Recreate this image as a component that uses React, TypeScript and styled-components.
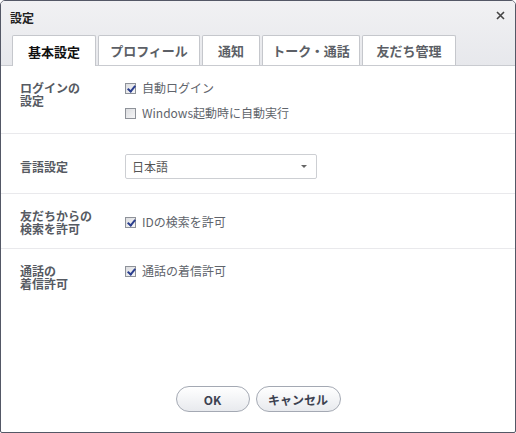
import { useState } from "react";
import styled, { createGlobalStyle } from "styled-components";

const GlobalStyle = createGlobalStyle`
  html, body {
    margin: 0;
    padding: 0;
    background: #ffffff;
  }
  body {
    font-family: "Noto Sans CJK JP", "Liberation Sans", sans-serif;
  }
`;

const tabs = [
  { label: "基本設定", width: 84 },
  { label: "プロフィール", width: 102 },
  { label: "通知", width: 58 },
  { label: "トーク・通話", width: 98 },
  { label: "友だち管理", width: 94 },
];

export default function App() {
  const [active, setActive] = useState(0);
  const [autoLogin, setAutoLogin] = useState(true);
  const [startup, setStartup] = useState(false);
  const [idSearch, setIdSearch] = useState(true);
  const [calls, setCalls] = useState(true);

  return (
    <>
      <GlobalStyle />
      <Window>
        <Header>
          <TitleRow>
            <Title>設定</Title>
            <CloseButton aria-label="close">
              <svg width="9" height="9" viewBox="0 0 9 9">
                <path d="M1 1L8 8M8 1L1 8" stroke="#444" strokeWidth="1.6" />
              </svg>
            </CloseButton>
          </TitleRow>
          <TabBar>
            {tabs.map((t, i) => (
              <Tab key={t.label} $w={t.width} $active={i === active} onClick={() => setActive(i)}>
                {t.label}
              </Tab>
            ))}
          </TabBar>
        </Header>

        <Body>
          <Section $pad="15px 0 13px">
            <Label>ログインの<br />設定</Label>
            <Options>
              <Check>
                <Box $checked={autoLogin} onClick={() => setAutoLogin(!autoLogin)} />
                自動ログイン
              </Check>
              <Check>
                <Box $checked={startup} onClick={() => setStartup(!startup)} />
                Windows起動時に自動実行
              </Check>
            </Options>
          </Section>

          <Section $pad="20px 0 14px">
            <Label $center>言語設定</Label>
            <Select>
              <span>日本語</span>
              <Caret />
            </Select>
          </Section>

          <Section $pad="15px 0 13px">
            <Label>友だちからの<br />検索を許可</Label>
            <Options $top={6}>
              <Check>
                <Box $checked={idSearch} onClick={() => setIdSearch(!idSearch)} />
                IDの検索を許可
              </Check>
            </Options>
          </Section>

          <Section $pad="15px 0 0" $last>
            <Label>通話の<br />着信許可</Label>
            <Options>
              <Check>
                <Box $checked={calls} onClick={() => setCalls(!calls)} />
                通話の着信許可
              </Check>
            </Options>
          </Section>

          <Footer>
            <PillButton $w={74}>OK</PillButton>
            <PillButton $w={85}>キャンセル</PillButton>
          </Footer>
        </Body>
      </Window>
    </>
  );
}

// =================== Styled Components ===================

const Window = styled.div`
  width: 516px;
  height: 433px;
  box-sizing: border-box;
  border: 1px solid #545866;
  border-radius: 5px 5px 2px 2px;
  background: #ffffff;
  display: flex;
  flex-direction: column;
  overflow: hidden;
`;

const Header = styled.div`
  background: linear-gradient(#f1f1f3, #e7e8ec);
  border-bottom: 1px solid #c9cbd0;
  height: 64px;
  display: flex;
  flex-direction: column;
`;

const TitleRow = styled.div`
  height: 34px;
  display: flex;
  align-items: flex-start;
  justify-content: space-between;
  padding: 0 9px 0 9px;
`;

const Title = styled.div`
  font-size: 12px;
  font-weight: 700;
  color: #222;
  margin-top: 8px;
`;

const CloseButton = styled.button`
  border: none;
  background: none;
  padding: 0;
  margin-top: 7px;
  width: 12px;
  height: 12px;
  cursor: pointer;
`;

const TabBar = styled.div`
  display: flex;
  align-items: flex-end;
  gap: 2px;
  padding-left: 11px;
  flex: 1;
`;

const Tab = styled.div<{ $active?: boolean; $w: number }>`
  width: ${({ $w }) => $w}px;
  box-sizing: border-box;
  padding: 0;
  display: flex;
  align-items: center;
  justify-content: center;
  font-size: 13px;
  font-weight: 700;
  white-space: nowrap;
  color: ${({ $active }) => ($active ? "#111" : "#5c5f66")};
  background: #ffffff;
  border: 1px solid #c5c7cc;
  border-bottom: none;
  border-radius: 2px 2px 0 0;
  margin-bottom: ${({ $active }) => ($active ? "-1px" : "0")};
  height: ${({ $active }) => ($active ? "31px" : "30px")};
  cursor: pointer;
`;

const Body = styled.div`
  flex: 1;
  display: flex;
  flex-direction: column;
`;

const Section = styled.div<{ $pad?: string; $last?: boolean }>`
  display: grid;
  grid-template-columns: 105px 1fr;
  align-items: start;
  padding: ${({ $pad }) => $pad || "15px 0 14px"};
  padding-left: 19px;
  border-bottom: ${({ $last }) => ($last ? "none" : "1px solid #e9e9ec")};
`;

const Label = styled.div<{ $center?: boolean }>`
  font-size: 12px;
  font-weight: 700;
  line-height: 13px;
  color: #565a62;
  align-self: ${({ $center }) => ($center ? "center" : "start")};
`;

const Options = styled.div<{ $top?: number }>`
  display: flex;
  flex-direction: column;
  gap: 11px;
  margin-top: ${({ $top }) => $top || 0}px;
`;

const Check = styled.label`
  display: flex;
  align-items: center;
  gap: 6px;
  font-size: 12px;
  line-height: 14px;
  color: #60646b;
`;

const Box = styled.span<{ $checked?: boolean }>`
  width: 11px;
  height: 11px;
  box-sizing: border-box;
  border: 1px solid #8e9299;
  background: linear-gradient(135deg, #dcdde0, #f6f6f7);
  position: relative;
  cursor: pointer;
  flex-shrink: 0;

  &::after {
    content: "";
    display: ${({ $checked }) => ($checked ? "block" : "none")};
    position: absolute;
    left: 3px;
    top: 0px;
    width: 3px;
    height: 6px;
    border: solid #2b3f8f;
    border-width: 0 2px 2px 0;
    transform: rotate(40deg);
  }
`;

const Select = styled.div`
  width: 192px;
  height: 25px;
  box-sizing: border-box;
  border: 1px solid #cdcfd3;
  border-radius: 2px;
  display: flex;
  align-items: center;
  justify-content: space-between;
  padding: 0 9px 0 6px;
  font-size: 12px;
  color: #555;
  background: #fff;
`;

const Caret = styled.span`
  width: 0;
  height: 0;
  border-left: 3px solid transparent;
  border-right: 3px solid transparent;
  border-top: 3px solid #666;
`;

const Footer = styled.div`
  margin-top: auto;
  display: flex;
  justify-content: center;
  gap: 6px;
  padding: 0 0 20px 0;
`;

const PillButton = styled.button<{ $w: number }>`
  width: ${({ $w }) => $w}px;
  height: 26px;
  padding: 0;
  border: 1px solid #a4a9b3;
  border-radius: 13px;
  background: linear-gradient(#ffffff, #e8eaee);
  font-family: "Noto Sans CJK JP", "Liberation Sans", sans-serif;
  font-size: 12px;
  font-weight: 700;
  color: #3c4150;
  cursor: pointer;
`;
